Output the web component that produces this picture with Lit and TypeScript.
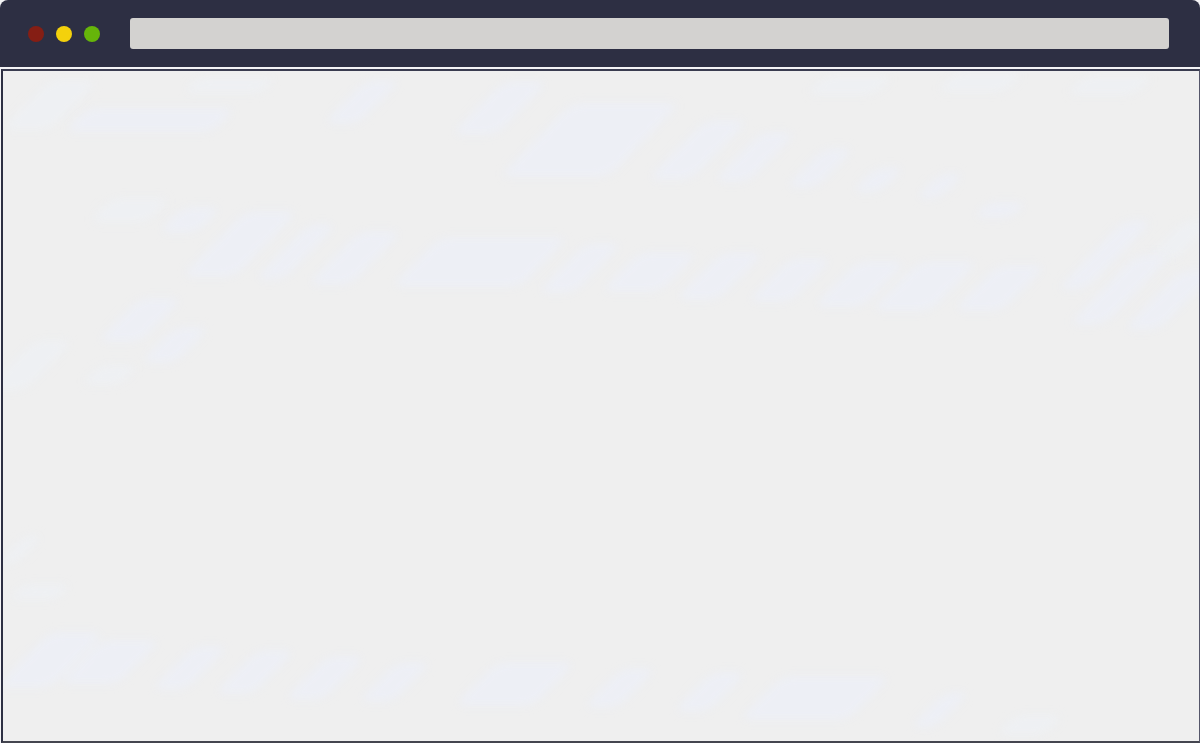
import { LitElement, html, css, svg } from "lit";
import { customElement } from "lit/decorators.js";

type Smear = [number, number, number, number];

// x, y (centre), width, height of each faint diagonal smear in the page background
const SMEARS: Smear[] = [
  [150, 120, 150, 24], [362, 102, 36, 44], [500, 108, 46, 54], [590, 140, 110, 74],
  [698, 150, 44, 60], [755, 157, 36, 50], [820, 168, 32, 40], [878, 180, 30, 26], [940, 186, 26, 26],
  [1000, 210, 40, 16], [190, 220, 40, 26], [240, 244, 54, 66], [296, 252, 30, 56], [355, 258, 44, 54],
  [480, 262, 130, 50], [580, 268, 38, 50], [650, 272, 60, 40], [720, 276, 44, 48], [790, 280, 44, 44],
  [860, 284, 50, 46], [925, 286, 60, 50], [1000, 288, 50, 46], [1105, 255, 30, 70], [1120, 290, 36, 70],
  [1170, 300, 36, 60], [140, 320, 44, 44], [175, 345, 36, 36], [50, 660, 56, 56], [110, 662, 60, 44],
  [190, 668, 36, 44], [255, 672, 40, 44], [325, 678, 40, 44], [395, 682, 36, 40], [515, 684, 80, 44],
  [620, 688, 36, 40], [710, 692, 36, 40], [815, 698, 110, 44], [940, 710, 26, 36],
];

// the same smears at their faintest, near the edges of the page
const FAINT: Smear[] = [
  [50, 105, 50, 50], [130, 210, 60, 24], [30, 365, 40, 50], [110, 375, 40, 20], [20, 550, 20, 30],
  [40, 592, 50, 16], [850, 85, 70, 20], [980, 82, 70, 20], [1110, 85, 70, 20], [1030, 725, 50, 20],
  [230, 85, 80, 16], [1180, 240, 30, 40],
];

@customElement("app-root")
export class AppRoot extends LitElement {
  static styles = css`
    :host {
      display: flex;
      flex-direction: column;
      width: 1200px;
      height: 743px;
      overflow: hidden;
      background: #f4f4f6;
    }
    .chrome {
      flex: 0 0 67px;
      display: flex;
      align-items: center;
      gap: 30px;
      padding: 0 31px 0 28px;
      box-sizing: border-box;
      background: #2d2f43;
      border-radius: 8px 8px 0 0;
    }
    .lights {
      display: flex;
      gap: 12px;
    }
    .light {
      width: 16px;
      height: 16px;
      border-radius: 50%;
    }
    .red { background: #851e14; }
    .yellow { background: #f4d10c; }
    .green { background: #66b50a; }
    .address {
      flex: 1;
      height: 31px;
      border-radius: 3px;
      background: #d3d2d0;
    }
    .viewport {
      position: relative;
      flex: 1;
      margin: 2px 0 0 1px;
      box-sizing: border-box;
      border-style: solid;
      border-width: 2px 1px 2px 2px;
      border-color: #3a3c50 #55566a #44454f #2d2f43;
      background: #efefef;
      overflow: hidden;
    }
    svg {
      position: absolute;
      left: -3px;
      top: -71px;
      display: block;
    }
    .smears {
      fill: #edeff5;
    }
    .smears.faint {
      fill: #eef0f3;
    }
  `;

  private smear([x, y, w, h]: Smear) {
    return svg`<rect
      x=${-w / 2}
      y=${-h / 2}
      width=${w}
      height=${h}
      rx="10"
      transform="translate(${x} ${y}) skewX(-44)"
    ></rect>`;
  }

  render() {
    return html`
      <div class="chrome">
        <div class="lights">
          <div class="light red"></div>
          <div class="light yellow"></div>
          <div class="light green"></div>
        </div>
        <div class="address"></div>
      </div>
      <div class="viewport">
        <svg width="1200" height="743" viewBox="0 0 1200 743" aria-hidden="true">
          <defs>
            <filter id="soft" x="-20%" y="-20%" width="140%" height="140%">
              <feGaussianBlur stdDeviation="4"></feGaussianBlur>
            </filter>
          </defs>
          <g class="smears faint" filter="url(#soft)">${FAINT.map((s) => this.smear(s))}</g>
          <g class="smears" filter="url(#soft)">${SMEARS.map((s) => this.smear(s))}</g>
        </svg>
      </div>
    `;
  }
}
